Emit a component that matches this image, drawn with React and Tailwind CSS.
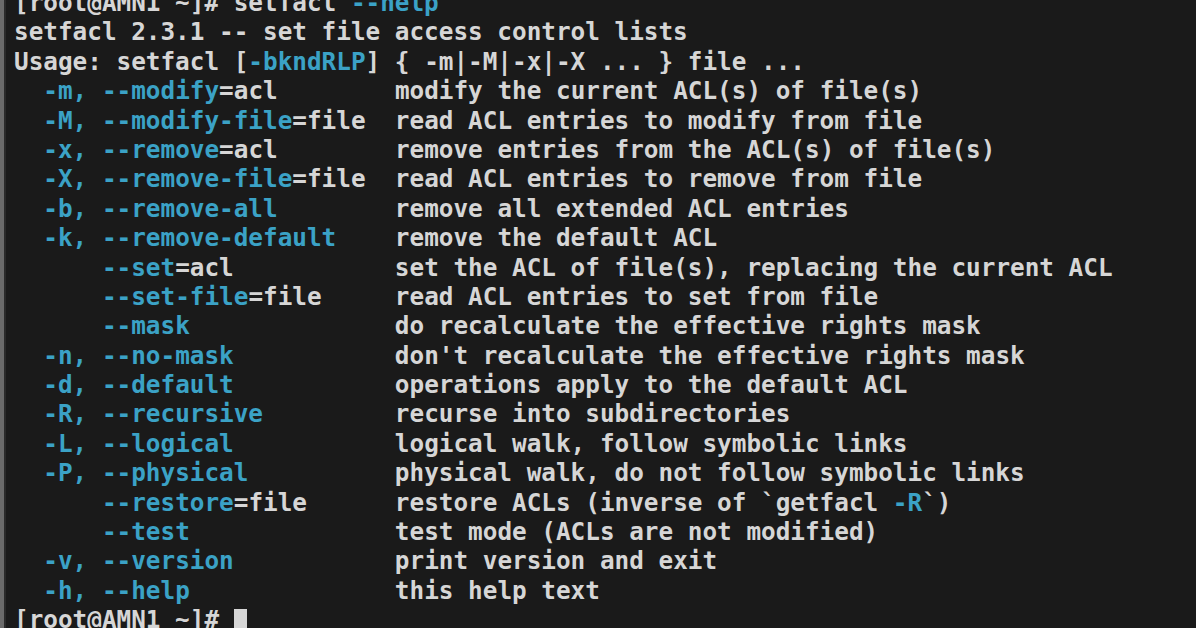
import React from "react";

const C = "text-[#3ba2c6]";
const W = "text-[#d6d6d6]";

// option rows: short flag, long flag, argument, description
const options = [
  ["-m", "--modify", "=acl", "modify the current ACL(s) of file(s)"],
  ["-M", "--modify-file", "=file", "read ACL entries to modify from file"],
  ["-x", "--remove", "=acl", "remove entries from the ACL(s) of file(s)"],
  ["-X", "--remove-file", "=file", "read ACL entries to remove from file"],
  ["-b", "--remove-all", "", "remove all extended ACL entries"],
  ["-k", "--remove-default", "", "remove the default ACL"],
  ["", "--set", "=acl", "set the ACL of file(s), replacing the current ACL"],
  ["", "--set-file", "=file", "read ACL entries to set from file"],
  ["", "--mask", "", "do recalculate the effective rights mask"],
  ["-n", "--no-mask", "", "don't recalculate the effective rights mask"],
  ["-d", "--default", "", "operations apply to the default ACL"],
  ["-R", "--recursive", "", "recurse into subdirectories"],
  ["-L", "--logical", "", "logical walk, follow symbolic links"],
  ["-P", "--physical", "", "physical walk, do not follow symbolic links"],
  ["", "--restore", "=file", "restore ACLs (inverse of `getfacl -R`)"],
  ["", "--test", "", "test mode (ACLs are not modified)"],
  ["-v", "--version", "", "print version and exit"],
  ["-h", "--help", "", "this help text"],
];

const Line = ({ children }) => <div className="h-[29.4px] whitespace-pre">{children}</div>;

const OptionRow = ({ opt }) => {
  const [short, long, arg, desc] = opt;
  const used = 2 + (short ? 4 : 4) + long.length + arg.length;
  const pad = " ".repeat(Math.max(2, 26 - used));
  let descNode = <span className={W}>{desc}</span>;
  if (desc.includes("-R")) {
    const [a, b] = desc.split("-R");
    descNode = (
      <>
        <span className={W}>{a}</span>
        <span className={C}>-R</span>
        <span className={W}>{b}</span>
      </>
    );
  }
  return (
    <Line>
      <span className={W}>{"  "}</span>
      {short ? <span className={C}>{short + ","}</span> : <span>{"   "}</span>}
      <span>{" "}</span>
      <span className={C}>{long}</span>
      <span className={W}>{arg}</span>
      <span>{pad}</span>
      {descNode}
    </Line>
  );
};

export default function App() {
  return (
    <div className="h-[628px] w-[1196px] overflow-hidden bg-[#1a1a1a] flex">
      <div className="w-[4px] bg-[#6a6a6a]" />
      <div className="w-[2px] bg-[#2a2a2a]" />
      <div
        className="pl-[8px] -mt-[12px] text-[24.33px] leading-[29.4px] font-bold"
        style={{ fontFamily: '"DejaVu Sans Mono", monospace' }}
      >
        <Line>
          <span className={W}>{"[root@AMN1 ~]# setfacl "}</span>
          <span className={C}>--help</span>
        </Line>
        <Line>
          <span className={W}>setfacl 2.3.1 -- set file access control lists</span>
        </Line>
        <Line>
          <span className={W}>{"Usage: setfacl ["}</span>
          <span className={C}>-bkndRLP</span>
          <span className={W}>{"] { -m|-M|-x|-X ... } file ..."}</span>
        </Line>
        {options.map((o, i) => (
          <OptionRow key={i} opt={o} />
        ))}
        <Line>
          <span className={W}>{"[root@AMN1 ~]# "}</span>
          <span className="inline-block w-[13px] h-[24px] bg-[#d6d6d6] align-middle" />
        </Line>
      </div>
    </div>
  );
}
